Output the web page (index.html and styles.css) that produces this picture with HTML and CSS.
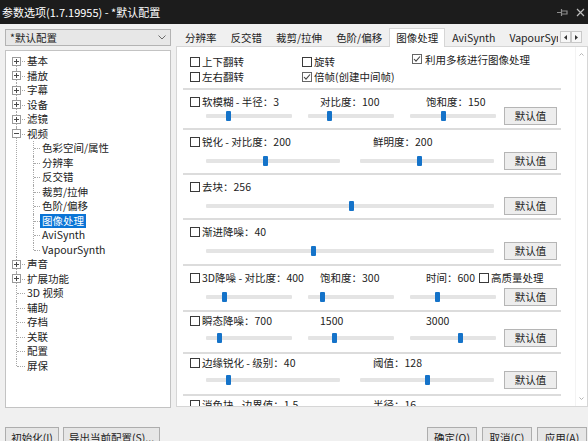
FILE: index.html
```html
<!DOCTYPE html>
<html lang="zh-CN">
<head>
<meta charset="utf-8">
<title>参数选项</title>
<link rel="stylesheet" href="styles.css">
</head>
<body>
<div class="window">
  <header class="titlebar">
    <span class="title">参数选项(1.7.19955) - *默认配置</span>
    <span class="title-icons">
      <svg class="pin" width="11" height="9" viewBox="0 0 11 9"><path d="M0 4.5H4M4.5 1V8M5 3H10V6H5" fill="none" stroke="#8d8d8d" stroke-width="1.2"/></svg>
      <svg class="close" width="9" height="9" viewBox="0 0 9 9"><path d="M1 1L8 8M8 1L1 8" stroke="#bdbdbd" stroke-width="1.2"/></svg>
    </span>
  </header>

  <div class="main">
    <aside class="left">
      <div class="combo">
        <span>*默认配置</span>
        <svg width="8" height="5" viewBox="0 0 8 5"><path d="M0.5 0.5L4 4L7.5 0.5" fill="none" stroke="#6a6a6a"/></svg>
      </div>
      <ul class="tree">
        <li><div class="row"><svg class="toggle" width="9" height="9" viewBox="0 0 9 9"><rect x="0.5" y="0.5" width="8" height="8" fill="#fff" stroke="#9a9a9a"/><path d="M2 4.5H7M4.5 2V7" stroke="#4a4a4a"/></svg><span class="tl">基本</span></div></li>
        <li><div class="row"><svg class="toggle" width="9" height="9" viewBox="0 0 9 9"><rect x="0.5" y="0.5" width="8" height="8" fill="#fff" stroke="#9a9a9a"/><path d="M2 4.5H7M4.5 2V7" stroke="#4a4a4a"/></svg><span class="tl">播放</span></div></li>
        <li><div class="row"><svg class="toggle" width="9" height="9" viewBox="0 0 9 9"><rect x="0.5" y="0.5" width="8" height="8" fill="#fff" stroke="#9a9a9a"/><path d="M2 4.5H7M4.5 2V7" stroke="#4a4a4a"/></svg><span class="tl">字幕</span></div></li>
        <li><div class="row"><svg class="toggle" width="9" height="9" viewBox="0 0 9 9"><rect x="0.5" y="0.5" width="8" height="8" fill="#fff" stroke="#9a9a9a"/><path d="M2 4.5H7M4.5 2V7" stroke="#4a4a4a"/></svg><span class="tl">设备</span></div></li>
        <li><div class="row"><svg class="toggle" width="9" height="9" viewBox="0 0 9 9"><rect x="0.5" y="0.5" width="8" height="8" fill="#fff" stroke="#9a9a9a"/><path d="M2 4.5H7M4.5 2V7" stroke="#4a4a4a"/></svg><span class="tl">滤镜</span></div></li>
        <li>
          <div class="row"><svg class="toggle" width="9" height="9" viewBox="0 0 9 9"><rect x="0.5" y="0.5" width="8" height="8" fill="#fff" stroke="#9a9a9a"/><path d="M2 4.5H7" stroke="#4a4a4a"/></svg><span class="tl">视频</span></div>
          <ul class="sub">
            <li><div class="row"><span class="tl">色彩空间/属性</span></div></li>
            <li><div class="row"><span class="tl">分辨率</span></div></li>
            <li><div class="row"><span class="tl">反交错</span></div></li>
            <li><div class="row"><span class="tl">裁剪/拉伸</span></div></li>
            <li><div class="row"><span class="tl">色阶/偏移</span></div></li>
            <li><div class="row"><span class="tl sel">图像处理</span></div></li>
            <li><div class="row"><span class="tl">AviSynth</span></div></li>
            <li><div class="row"><span class="tl">VapourSynth</span></div></li>
          </ul>
        </li>
        <li><div class="row"><svg class="toggle" width="9" height="9" viewBox="0 0 9 9"><rect x="0.5" y="0.5" width="8" height="8" fill="#fff" stroke="#9a9a9a"/><path d="M2 4.5H7M4.5 2V7" stroke="#4a4a4a"/></svg><span class="tl">声音</span></div></li>
        <li><div class="row"><svg class="toggle" width="9" height="9" viewBox="0 0 9 9"><rect x="0.5" y="0.5" width="8" height="8" fill="#fff" stroke="#9a9a9a"/><path d="M2 4.5H7M4.5 2V7" stroke="#4a4a4a"/></svg><span class="tl">扩展功能</span></div></li>
        <li><div class="row"><span class="nobox"></span><span class="tl">3D 视频</span></div></li>
        <li><div class="row"><span class="nobox"></span><span class="tl">辅助</span></div></li>
        <li><div class="row"><span class="nobox"></span><span class="tl">存档</span></div></li>
        <li><div class="row"><span class="nobox"></span><span class="tl">关联</span></div></li>
        <li><div class="row"><span class="nobox"></span><span class="tl">配置</span></div></li>
        <li><div class="row"><span class="nobox"></span><span class="tl">屏保</span></div></li>
      </ul>
    </aside>

    <section class="right">
      <nav class="tabs">
        <div class="tabstrip">
          <span class="tab">分辨率</span>
          <span class="tab">反交错</span>
          <span class="tab">裁剪/拉伸</span>
          <span class="tab">色阶/偏移</span>
          <span class="tab active">图像处理</span>
          <span class="tab">AviSynth</span>
          <span class="tab">VapourSynth</span>
        </div>
        <div class="tab-arrows">
          <span class="arr"><svg width="3" height="5" viewBox="0 0 3 5"><path d="M3 0V5L0 2.5Z" fill="#333"/></svg></span>
          <span class="arr"><svg width="3" height="5" viewBox="0 0 3 5"><path d="M0 0V5L3 2.5Z" fill="#333"/></svg></span>
        </div>
      </nav>

      <div class="panel">
        <div class="content">
          <div class="top-opts">
            <label class="cb"><span class="box"></span>上下翻转</label>
            <label class="cb"><span class="box"></span>旋转</label>
            <label class="cb raise"><span class="box on"><svg width="8" height="8" viewBox="0 0 8 8"><path d="M1 4L3 6.2L7 1.5" fill="none" stroke="#444" stroke-width="1.1"/></svg></span>利用多核进行图像处理</label>
            <label class="cb"><span class="box"></span>左右翻转</label>
            <label class="cb"><span class="box on"><svg width="8" height="8" viewBox="0 0 8 8"><path d="M1 4L3 6.2L7 1.5" fill="none" stroke="#444" stroke-width="1.1"/></svg></span>倍帧(创建中间帧)</label>
          </div>

          <div class="sec first">
            <div class="lbls c3">
              <label class="cb"><span class="box"></span>软模糊 - 半径：3</label>
              <span>对比度：100</span>
              <span>饱和度：150</span>
            </div>
            <div class="srow">
              <div class="sliders c3">
                <div class="track"><span class="thumb" style="left:25.6%"></span></div>
                <div class="track"><span class="thumb" style="left:24.7%"></span></div>
                <div class="track"><span class="thumb" style="left:38.4%"></span></div>
              </div>
              <button class="btn">默认值</button>
            </div>
          </div>

          <div class="sec">
            <div class="lbls c2">
              <label class="cb"><span class="box"></span>锐化 - 对比度：200</label>
              <span>鲜明度：200</span>
            </div>
            <div class="srow">
              <div class="sliders c2">
                <div class="track"><span class="thumb" style="left:44%"></span></div>
                <div class="track"><span class="thumb" style="left:44%"></span></div>
              </div>
              <button class="btn">默认值</button>
            </div>
          </div>

          <div class="sec">
            <div class="lbls">
              <label class="cb"><span class="box"></span>去块：256</label>
            </div>
            <div class="srow">
              <div class="sliders c1">
                <div class="track"><span class="thumb" style="left:50.3%"></span></div>
              </div>
              <button class="btn">默认值</button>
            </div>
          </div>

          <div class="sec tall">
            <div class="lbls">
              <label class="cb"><span class="box"></span>渐进降噪：40</label>
            </div>
            <div class="srow">
              <div class="sliders c1">
                <div class="track"><span class="thumb" style="left:37.2%"></span></div>
              </div>
              <button class="btn">默认值</button>
            </div>
          </div>

          <div class="sec tall">
            <div class="lbls c3">
              <label class="cb"><span class="box"></span>3D降噪 - 对比度：400</label>
              <span>饱和度：300</span>
              <span class="with-cb">时间：600<label class="cb"><span class="box"></span>高质量处理</label></span>
            </div>
            <div class="srow">
              <div class="sliders c3">
                <div class="track"><span class="thumb" style="left:20.5%"></span></div>
                <div class="track"><span class="thumb" style="left:16.5%"></span></div>
                <div class="track"><span class="thumb" style="left:31.4%"></span></div>
              </div>
              <button class="btn">默认值</button>
            </div>
          </div>

          <div class="sec tight">
            <div class="lbls c3">
              <label class="cb"><span class="box"></span>瞬态降噪：700</label>
              <span>1500</span>
              <span>3000</span>
            </div>
            <div class="srow">
              <div class="sliders c3">
                <div class="track"><span class="thumb" style="left:15.1%"></span></div>
                <div class="track"><span class="thumb" style="left:30.2%"></span></div>
                <div class="track"><span class="thumb" style="left:58.1%"></span></div>
              </div>
              <button class="btn">默认值</button>
            </div>
          </div>

          <div class="sec tight">
            <div class="lbls c2">
              <label class="cb"><span class="box"></span>边缘锐化 - 级别：40</label>
              <span>阈值：128</span>
            </div>
            <div class="srow">
              <div class="sliders c2">
                <div class="track"><span class="thumb" style="left:16.4%"></span></div>
                <div class="track"><span class="thumb" style="left:50%"></span></div>
              </div>
              <button class="btn">默认值</button>
            </div>
          </div>

          <div class="sec cut">
            <div class="lbls c2">
              <label class="cb"><span class="box"></span>消色块 - 边界值：1.5</label>
              <span>半径：16</span>
            </div>
          </div>
        </div>
        <div class="vscroll">
          <svg width="5" height="3" viewBox="0 0 5 3"><path d="M0.5 2.5L2.5 0.5L4.5 2.5" fill="none" stroke="#b5b5b5"/></svg>
          <svg width="5" height="3" viewBox="0 0 5 3"><path d="M0.5 0.5L2.5 2.5L4.5 0.5" fill="none" stroke="#b5b5b5"/></svg>
        </div>
      </div>
    </section>
  </div>

  <footer class="footer">
    <div class="fgroup left-group">
      <button class="fbtn w54">初始化(I)</button>
      <button class="fbtn w97">导出当前配置(S)...</button>
    </div>
    <div class="fgroup right-group">
      <button class="fbtn w50">确定(O)</button>
      <button class="fbtn w50">取消(C)</button>
      <button class="fbtn w50">应用(A)</button>
    </div>
  </footer>
</div>
</body>
</html>
```

FILE: styles.css
```css
* { box-sizing: border-box; }

html, body { margin: 0; padding: 0; }

body {
  width: 588px;
  height: 441px;
  overflow: hidden;
  background: #f0f0f0;
  font-family: "Noto Sans CJK SC", "Microsoft YaHei", sans-serif;
  font-size: 10.5px;
  color: #222;
}

.window {
  display: flex;
  flex-direction: column;
  height: 441px;
}

/* title bar */
.titlebar {
  height: 24px;
  flex: none;
  background: #1c1c1c;
  color: #fff;
  display: flex;
  align-items: center;
  justify-content: space-between;
  padding: 0 3px 0 2px;
}
.title { font-size: 11px; line-height: 24px; }
.title-icons { display: flex; align-items: center; gap: 8px; }

/* main area */
.main {
  display: flex;
  gap: 5px;
  padding: 4px 0 0 5px;
  height: 384px;
  flex: none;
}

.left {
  width: 166px;
  flex: none;
  display: flex;
  flex-direction: column;
}

.combo {
  margin-top: 1px;
  height: 17px;
  border: 1px solid #b3b3b3;
  background: #e7e7e7;
  display: flex;
  align-items: center;
  justify-content: space-between;
  padding: 0 4px 0 4px;
  line-height: 15px;
}

/* tree */
.tree {
  list-style: none;
  margin: 4px 0 0;
  padding: 3px 0 0;
  height: 358px;
  background: #fff;
  border: 1px solid #c3c3c3;
  overflow: hidden;
}
.tree ul { list-style: none; margin: 0; padding: 0; }
.tree li { position: relative; }
.tree .row {
  position: relative;
  display: flex;
  align-items: center;
  height: 14.5px;
  line-height: 14.5px;
  padding-left: 6px;
  white-space: nowrap;
}
.tree > li::before {
  content: "";
  position: absolute;
  left: 10px;
  top: 0;
  bottom: 0;
  border-left: 1px dotted #a8a8a8;
}
.tree > li:first-child::before { top: 7px; }
.tree > li:last-child::before { bottom: auto; height: 7px; }
.tree .row::after {
  content: "";
  position: absolute;
  left: 11px;
  top: 7px;
  width: 8px;
  border-top: 1px dotted #a8a8a8;
}
.toggle {
  position: relative;
  z-index: 1;
  flex: none;
  margin-right: 6px;
}
.nobox { width: 9px; height: 9px; margin-right: 6px; flex: none; }

.sub > li::before {
  content: "";
  position: absolute;
  left: 27px;
  top: 0;
  bottom: 0;
  border-left: 1px dotted #a8a8a8;
}
.sub > li:last-child::before { bottom: auto; height: 7px; }
.sub .row { padding-left: 36px; }
.sub .row::after { left: 28px; width: 6px; }

.tl { position: relative; z-index: 1; }
.tl.sel {
  background: #0a74d6;
  color: #fff;
  margin-left: -2px;
  padding: 0 2px;
}

/* right side */
.right {
  width: 412px;
  flex: none;
  display: flex;
  flex-direction: column;
}

.tabs {
  height: 18px;
  display: flex;
  align-items: flex-end;
  flex: none;
}
.tabstrip {
  flex: 1;
  display: flex;
  align-items: flex-end;
  overflow: hidden;
  height: 19px;
  margin-bottom: -1px;
  padding-left: 2px;
}
.tab {
  flex: none;
  padding: 0 7px;
  height: 17px;
  line-height: 15px;
  white-space: nowrap;
  color: #222;
}
.tab.active {
  position: relative;
  z-index: 1;
  height: 19px;
  line-height: 17px;
  padding: 0 6px;
  background: #fff;
  border: 1px solid #d6d6d6;
  border-bottom: none;
}
.tab-arrows {
  display: flex;
  margin: 0 6px 3px 2px;
  flex: none;
}
.arr {
  width: 11px;
  height: 12px;
  border: 1px solid #c9c9c9;
  background: #f7f7f7;
  display: flex;
  align-items: center;
  justify-content: center;
}

.panel {
  height: 361px;
  display: flex;
  background: #fff;
  border: 1px solid #d6d6d6;
}
.content {
  flex: 1;
  overflow: hidden;
  padding-left: 6px;
}
.vscroll {
  width: 12px;
  flex: none;
  display: flex;
  flex-direction: column;
  justify-content: space-between;
  align-items: center;
  padding: 6px 0 6px;
  border-left: 1px solid #f3f3f3;
}

/* checkboxes */
.cb {
  display: inline-flex;
  align-items: center;
  gap: 2px;
  white-space: nowrap;
}
.box {
  width: 10px;
  height: 10px;
  flex: none;
  border: 1px solid #3a3a3a;
  background: #fff;
  display: inline-flex;
  align-items: center;
  justify-content: center;
}
.box.on { border-color: #666; }

.top-opts {
  width: 378px;
  height: 41px;
  padding: 7px 0 0 7px;
  display: grid;
  grid-template-columns: 112px 110px auto;
  grid-auto-rows: 15px;
  align-items: center;
}
.top-opts .raise { margin-top: -5px; gap: 3px; }

/* sections */
.sec {
  width: 378px;
  height: 45px;
  padding: 0 4px 0 7px;
  border-top: 2px solid #dcdcdc;
}
.sec.first { height: 40px; }
.sec.tall { height: 46px; }
.sec.tight { height: 42px; }

.lbls {
  margin-top: 5px;
  height: 14px;
  line-height: 14px;
  display: grid;
  white-space: nowrap;
}
.lbls.c3 { grid-template-columns: 130px 106px auto; }
.lbls.c2 { grid-template-columns: 183px auto; }
.sec.tight .lbls { margin-top: 2px; }
.sec.cut .lbls { margin-top: 2px; }

.with-cb { display: flex; align-items: center; gap: 4px; }

.srow {
  margin-top: 3px;
  height: 18px;
  display: flex;
  align-items: center;
}
.sec.first .srow { margin-top: -2px; }
.sec.tight .srow { margin-top: 1px; }

.sliders {
  width: 308px;
  padding-left: 16px;
  display: grid;
  align-items: center;
}
.sliders.c3 { grid-template-columns: repeat(3, 86px); column-gap: 16px; }
.sliders.c2 { grid-template-columns: 134px 134px; column-gap: 20px; }
.sliders.c1 { grid-template-columns: 288px; }

.track {
  position: relative;
  height: 4px;
  background: #e4e4e4;
  border-radius: 1px;
}
.thumb {
  position: absolute;
  top: -3px;
  width: 5px;
  height: 10px;
  margin-left: -2px;
  background: #1573c9;
  border-radius: 1px;
}

.btn {
  margin-left: 6px;
  width: 53px;
  height: 18px;
  padding: 0;
  border: 1px solid #b5b5b5;
  background: #ededed;
  font: inherit;
  line-height: 16px;
  color: #222;
  text-align: center;
}

/* footer */
.footer {
  flex: 1;
  display: flex;
  justify-content: space-between;
  padding: 19px 1px 0 5px;
}
.fgroup { display: flex; }
.left-group { gap: 4px; }
.right-group { gap: 5px; }
.fbtn {
  height: 21px;
  padding: 0;
  border: 1px solid #adadad;
  background: #e6e6e6;
  font: inherit;
  line-height: 17px;
  color: #222;
  text-align: center;
}
.w54 { width: 54px; }
.w97 { width: 97px; }
.w50 { width: 50px; }
```
